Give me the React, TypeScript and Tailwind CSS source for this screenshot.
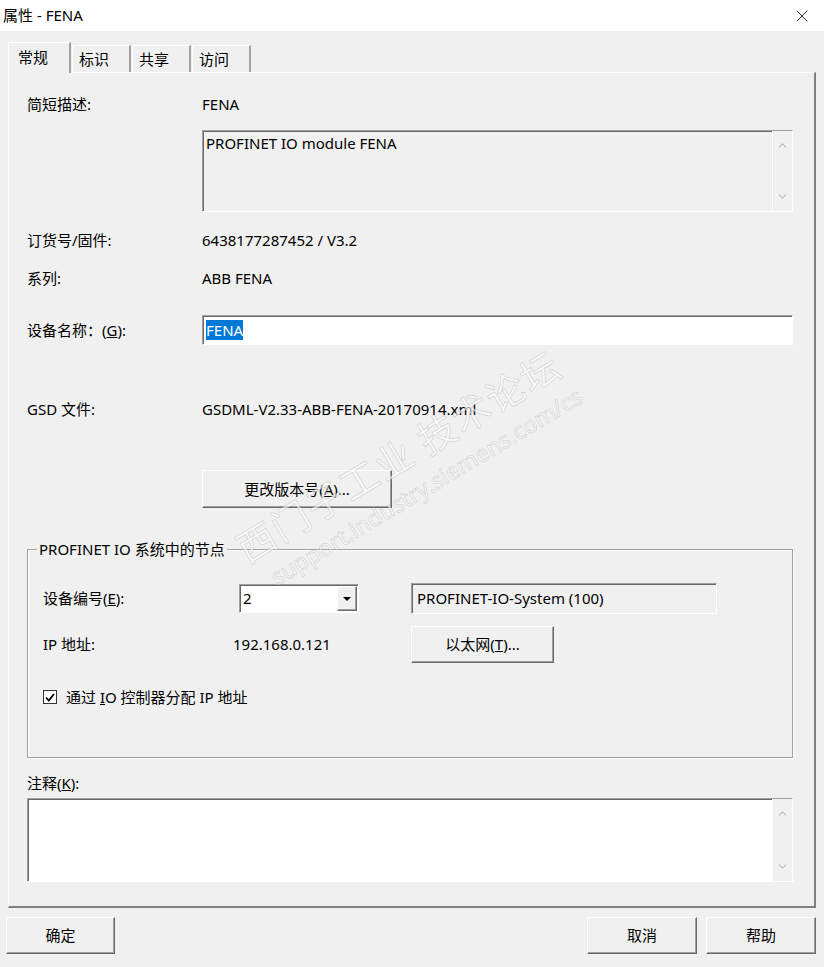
import React from "react";
import { ChevronUp, ChevronDown, X } from "lucide-react";

const sunken =
  "border-t border-l border-t-[#a0a0a0] border-l-[#a0a0a0] border-b border-r border-b-white border-r-white shadow-[inset_1px_1px_0_#696969]";
const raised =
  "border border-t-white border-l-white border-r-[#696969] border-b-[#696969] shadow-[inset_-1px_-1px_0_#a0a0a0] bg-[#f0f0f0]";

function Button({ children, className }: { children: React.ReactNode; className: string }) {
  return (
    <button className={`${raised} flex items-center justify-center text-black ${className}`}>
      {children}
    </button>
  );
}

function Scrollbar() {
  return (
    <div className="w-[20px] flex flex-col justify-between items-center py-[8px] border-l border-l-white bg-[#f0f0f0]">
      <ChevronUp className="w-[13px] h-[13px] text-[#bdbdbd]" strokeWidth={2} />
      <ChevronDown className="w-[13px] h-[13px] text-[#bdbdbd]" strokeWidth={2} />
    </div>
  );
}

function Row({ label, value, className }: { label: React.ReactNode; value: string; className: string }) {
  return (
    <div className={`flex items-center h-[20px] ${className}`}>
      <div className="w-[175px]">{label}</div>
      <div>{value}</div>
    </div>
  );
}

const tabs = ["常规", "标识", "共享", "访问"];

export default function App() {
  return (
    <div className="relative w-[824px] h-[967px] bg-[#f0f0f0] overflow-hidden text-[15px] text-black font-['Noto_Sans','Noto_Sans_CJK_SC',sans-serif]">
      {/* title bar */}
      <div className="h-[31px] bg-white flex items-center justify-between pl-[3px] pr-[12px]">
        <span className="text-[15px]">属性 - FENA</span>
        <X className="w-[20px] h-[20px] text-black" strokeWidth={1} />
      </div>

      {/* tabs */}
      <div className="flex items-end h-[41px] pl-[8px]">
        {tabs.map((t, i) => (
          <div
            key={t}
            className={
              i === 0
                ? "w-[63px] h-[31px] border-t border-l border-white border-r-2 border-r-[#a0a0a0] pl-[9px] pt-[3px] text-[15px] relative z-10 bg-[#f0f0f0] mb-[-1px]"
                : "w-[59px] h-[27px] border-t border-l border-white border-r-2 border-r-[#a0a0a0] pl-[6px] pt-[2px] text-[15px] ml-[1px]"
            }
          >
            {t}
          </div>
        ))}
      </div>

      {/* tab panel */}
      <div className="ml-[8px] w-[808px] h-[836px] border-t border-l border-white border-r-2 border-b-2 border-r-[#808080] border-b-[#808080] pl-[18px] pr-[21px]">
        <Row className="mt-[21px]" label="简短描述:" value="FENA" />

        <div className="flex mt-[16px]">
          <div className="w-[175px]" />
          <div className={`flex-1 h-[82px] flex ${sunken}`}>
            <div className="flex-1 px-[3px] pt-[1px]">PROFINET IO module FENA</div>
            <Scrollbar />
          </div>
        </div>

        <Row className="mt-[18px]" label="订货号/固件:" value="6438177287452 / V3.2" />
        <Row className="mt-[18px]" label="系列:" value="ABB FENA" />

        <div className="flex items-center mt-[27px]">
          <div className="w-[175px]">
            设备名称：(<span className="underline">G</span>):
          </div>
          <div className={`flex-1 h-[30px] bg-white flex items-center px-[3px] ${sunken}`}>
            <span className="bg-[#0078d7] text-white leading-[20px]">FENA</span>
          </div>
        </div>

        <Row className="mt-[54px]" label="GSD 文件:" value="GSDML-V2.33-ABB-FENA-20170914.xml" />

        <div className="flex mt-[51px]">
          <div className="w-[175px]" />
          <Button className="w-[190px] h-[38px]">
            更改版本号(<span className="underline">A</span>)...
          </Button>
        </div>

        {/* group box */}
        <div className="relative mt-[41px] h-[209px] border border-[#a0a0a0] shadow-[inset_1px_1px_0_#fff,1px_1px_0_#fff] pl-[15px]">
          <div className="absolute left-[9px] top-[-11px] px-[2px] bg-[#f0f0f0] leading-[20px]">
            PROFINET IO 系统中的节点
          </div>
          <div className="flex items-center mt-[33px]">
            <div className="w-[196px]">
              设备编号(<span className="underline">E</span>):
            </div>
            <div className={`w-[120px] h-[29px] bg-white flex items-center ${sunken}`}>
              <span className="flex-1 pl-[3px]">2</span>
              <div className={`${raised} w-[20px] h-[25px] mr-[1px] flex items-center justify-center`}>
                <svg width="8" height="4" viewBox="0 0 8 4">
                  <path d="M0 0 H8 L4 4 Z" fill="#000" />
                </svg>
              </div>
            </div>
            <div className={`ml-[52px] w-[306px] h-[31px] flex items-center pl-[5px] ${sunken}`}>
              PROFINET-IO-System (100)
            </div>
          </div>
          <div className="flex items-center mt-[12px]">
            <div className="w-[190px]">IP 地址:</div>
            <div className="w-[178px]">192.168.0.121</div>
            <Button className="w-[143px] h-[37px]">
              以太网(<span className="underline">T</span>)...
            </Button>
          </div>
          <div className="flex items-center mt-[23px]">
            <div className="w-[14px] h-[14px] bg-white border border-[#333] flex items-center justify-center">
              <svg width="10" height="9" viewBox="0 0 10 9">
                <path d="M1 4.5 L3.8 7.5 L9 1" stroke="#000" strokeWidth="1.8" fill="none" />
              </svg>
            </div>
            <span className="ml-[9px]">
              通过 <span className="underline">I</span>O 控制器分配 IP 地址
            </span>
          </div>
        </div>

        <div className="mt-[15px] h-[20px] flex items-center">
          注释(<span className="underline">K</span>):
        </div>
        <div className={`mt-[5px] h-[84px] bg-white flex ${sunken}`}>
          <div className="flex-1" />
          <Scrollbar />
        </div>
      </div>

      {/* bottom buttons */}
      <div className="flex mt-[9px] px-[6px]">
        <Button className="w-[109px] h-[37px]">确定</Button>
        <div className="flex-1" />
        <Button className="w-[110px] h-[37px]">取消</Button>
        <Button className="w-[110px] h-[37px] ml-[9px]">帮助</Button>
        <div className="w-[2px]" />
      </div>

      {/* watermark */}
      <div className="pointer-events-none absolute left-[248px] top-[528px] -rotate-[31deg] origin-left select-none">
        <div className="text-[38px] leading-[40px] tracking-[2px] text-white/60 [-webkit-text-stroke:1px_rgba(0,0,0,0.12)] font-['Noto_Sans_CJK_SC',sans-serif] whitespace-nowrap">
          西门子工业 技术论坛
        </div>
        <div className="text-[23px] leading-[26px] mt-[8px] ml-[14px] text-white/60 [-webkit-text-stroke:1px_rgba(0,0,0,0.12)] whitespace-nowrap">
          support.industry.siemens.com/cs
        </div>
      </div>
    </div>
  );
}
